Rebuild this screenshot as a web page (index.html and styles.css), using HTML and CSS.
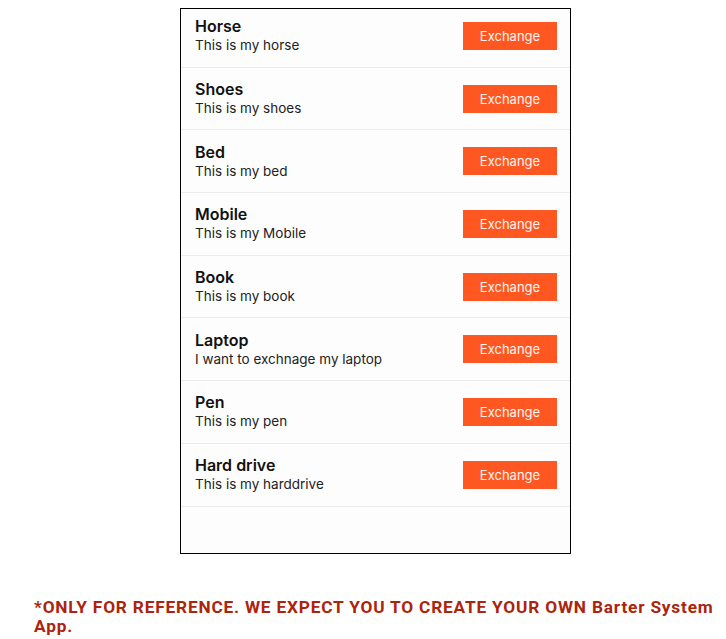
FILE: index.html
```html
<!DOCTYPE html>
<html>
<head>
<meta charset="utf-8">
<link rel="stylesheet" href="styles.css">
</head>
<body>
<div class="phone">
  <div class="list">
    <div class="row first">
      <div class="info"><div class="title">Horse</div><div class="desc">This is my horse</div></div>
      <button class="btn">Exchange</button>
    </div>
    <div class="row">
      <div class="info"><div class="title">Shoes</div><div class="desc">This is my shoes</div></div>
      <button class="btn">Exchange</button>
    </div>
    <div class="row">
      <div class="info"><div class="title">Bed</div><div class="desc">This is my bed</div></div>
      <button class="btn">Exchange</button>
    </div>
    <div class="row">
      <div class="info"><div class="title">Mobile</div><div class="desc">This is my Mobile</div></div>
      <button class="btn">Exchange</button>
    </div>
    <div class="row">
      <div class="info"><div class="title">Book</div><div class="desc">This is my book</div></div>
      <button class="btn">Exchange</button>
    </div>
    <div class="row">
      <div class="info"><div class="title">Laptop</div><div class="desc">I want to exchnage my laptop</div></div>
      <button class="btn">Exchange</button>
    </div>
    <div class="row">
      <div class="info"><div class="title">Pen</div><div class="desc">This is my pen</div></div>
      <button class="btn">Exchange</button>
    </div>
    <div class="row">
      <div class="info"><div class="title">Hard drive</div><div class="desc">This is my harddrive</div></div>
      <button class="btn">Exchange</button>
    </div>
  </div>
</div>
<p class="note">*ONLY FOR REFERENCE. WE EXPECT YOU TO CREATE YOUR OWN Barter System App.</p>
</body>
</html>
```
FILE: styles.css
```css
html, body {
  margin: 0;
  padding: 0;
  background: #ffffff;
}
body {
  padding-top: 8px;
}
.phone {
  width: 389px;
  height: 544px;
  margin-left: 180px;
  border: 1px solid #000;
  background: #fdfdfd;
  overflow: hidden;
}
.list {
  display: flex;
  flex-direction: column;
}
.row {
  height: 61.7px;
  border-bottom: 1px solid #ececec;
  display: flex;
  align-items: center;
  justify-content: space-between;
  padding: 0 13px 0 14px;
  box-sizing: content-box;
  flex-shrink: 0;
}
.row.first {
  margin-top: -4px;
}
.info {
  display: flex;
  flex-direction: column;
  font-family: Inter, "Noto Sans", sans-serif;
  color: #111;
}
.title {
  font-size: 16px;
  font-weight: 600;
  line-height: 19px;
}
.desc {
  font-size: 13.5px;
  line-height: 18px;
  color: #222;
}
.btn {
  width: 94px;
  height: 28px;
  border: none;
  background: #ff5722;
  color: #fff4ee;
  font-family: Inter, "Noto Sans", sans-serif;
  font-size: 13px;
  padding: 0;
}
.note {
  margin: 44px 0 0 34px;
  width: 690px;
  font-family: Roboto, "Liberation Sans", sans-serif;
  font-weight: 700;
  font-size: 17.3px;
  letter-spacing: 0.8px;
  line-height: 19px;
  color: #ad240c;
}
```
